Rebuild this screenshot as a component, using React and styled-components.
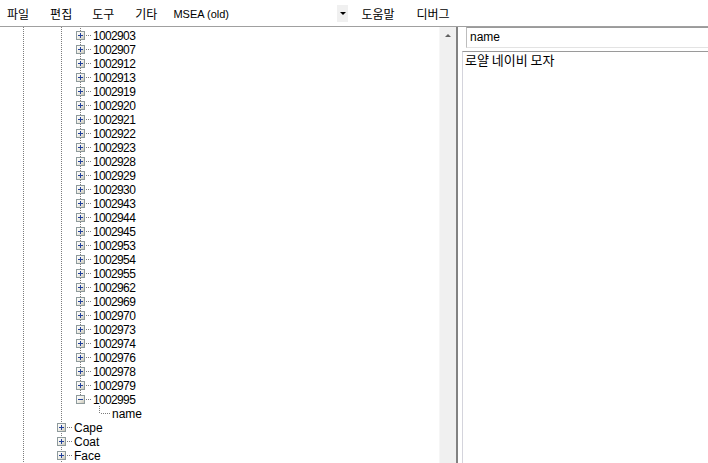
import React from 'react';
import styled, { createGlobalStyle } from 'styled-components';

const Global = createGlobalStyle`
  html, body { margin: 0; padding: 0; background: #fff; }
  body {
    width: 708px; height: 463px; overflow: hidden;
    font-family: "Liberation Sans", "Noto Sans CJK KR", sans-serif;
    color: #000;
  }
`;

const Window = styled.div`
  display: flex;
  flex-direction: column;
  width: 708px;
  height: 463px;
`;

const MenuBar = styled.div`
  box-sizing: border-box;
  height: 27px;
  display: flex;
  align-items: center;
  padding: 2px 0 0 7px;
  border-bottom: 1px solid #a0a0a0;
  flex: none;
`;

const MenuItem = styled.span`
  font-family: "Noto Sans CJK KR", sans-serif;
  font-size: 12px;
  line-height: 16px;
  margin-left: ${p => p.$ml || 0}px;
  white-space: nowrap;
`;

const Combo = styled.div`
  display: flex;
  align-items: center;
  width: 175px;
  margin-left: ${p => p.$ml}px;
  height: 17px;
  align-self: flex-start;
  margin-top: 3px;
`;

const ComboText = styled.span`
  flex: 1;
  font-family: "Liberation Sans", sans-serif;
  font-size: 11px;
  line-height: 17px;
  margin-top: 1px;
`;

const ComboButton = styled.span`
  width: 11px;
  height: 17px;
  background: #f0f0f0;
  display: flex;
  align-items: center;
  justify-content: center;
  &::before {
    content: "";
    border-left: 3px solid transparent;
    border-right: 3px solid transparent;
    border-top: 3px solid #000;
  }
`;

const Main = styled.div`
  flex: 1;
  display: flex;
  min-height: 0;
`;

const dots = 'repeating-linear-gradient(to bottom, #7c7c7c 0 1px, transparent 1px 2px)';

const TreePane = styled.div`
  flex: 0 0 439px;
  overflow: hidden;
  padding-top: 1px;
  box-sizing: border-box;
  background-image: ${dots}, ${dots};
  background-size: 1px 100%, 1px 100%;
  background-position: 23px 0, 61px 0;
  background-repeat: no-repeat;
`;

const Row = styled.div`
  display: flex;
  align-items: center;
  height: 14px;
  padding-left: ${p => p.$guide - 8}px;
`;

const Connector = styled.span`
  position: relative;
  flex: none;
  width: 21px;
  height: 14px;
  &::before {
    content: "";
    display: ${p => (p.$vertical === 'none' ? 'none' : 'block')};
    position: absolute;
    left: 8px;
    top: 0;
    width: 1px;
    height: ${p => (p.$vertical === 'top' ? 7 : 14)}px;
    background: ${dots};
  }
  &::after {
    content: "";
    position: absolute;
    left: 9px;
    top: 7px;
    width: 10px;
    height: 1px;
    background: repeating-linear-gradient(to right, transparent 0 1px, #7c7c7c 1px 2px);
  }
`;

const ExpandBox = styled.span`
  position: absolute;
  z-index: 1;
  left: 4px;
  top: 3px;
  width: 9px;
  height: 9px;
  box-sizing: border-box;
  border: 1px solid #8e9a9c;
  background: linear-gradient(135deg, #ffffff 0%, #f0efe8 50%, #c9c6b8 100%);
  &::before {
    content: "";
    position: absolute;
    left: 1px;
    top: 3px;
    width: 5px;
    height: 1px;
    background: #21409a;
  }
  &::after {
    content: "";
    display: ${p => (p.$open ? 'none' : 'block')};
    position: absolute;
    left: 3px;
    top: 1px;
    width: 1px;
    height: 5px;
    background: #21409a;
  }
`;

const Label = styled.span`
  font-family: "Liberation Sans", sans-serif;
  font-size: 12px;
  line-height: 14px;
  letter-spacing: ${p => (p.$numeric ? '-0.65px' : '0')};
  white-space: nowrap;
  margin-top: 1px;
`;

const Scrollbar = styled.div`
  flex: 0 0 17px;
  background: #f0f0f0;
  border-left: 1px solid #f6f6f6;
  box-sizing: border-box;
  display: flex;
  flex-direction: column;
`;

const ScrollUp = styled.div`
  height: 17px;
  display: flex;
  align-items: center;
  justify-content: center;
  &::before {
    content: "";
    border-left: 3px solid transparent;
    border-right: 3px solid transparent;
    border-bottom: 3px solid #606060;
  }
`;

const Splitter = styled.div`
  flex: 0 0 6px;
  box-sizing: border-box;
  border-left: 2px solid #828282;
`;

const RightPane = styled.div`
  flex: 1;
  display: flex;
  flex-direction: column;
  min-width: 0;
`;

const NameInput = styled.div`
  box-sizing: border-box;
  height: 21px;
  margin-left: 4px;
  border: 1px solid #bdbdbd;
  border-top-color: #9a9a9a;
  border-right: none;
  border-bottom-color: #e3e3e3;
  padding-left: 3px;
  font-family: "Liberation Sans", sans-serif;
  font-size: 12px;
  line-height: 18px;
`;

const TextArea = styled.div`
  flex: 1;
  margin-top: 3px;
  border-top: 1px solid #9a9a9a;
  border-left: 1px solid #d4d4dc;
  padding: 0 0 0 2px;
  font-family: "Noto Sans CJK KR", sans-serif;
  font-size: 13px;
  line-height: 16px;
`;

const ids = [
  '1002903', '1002907', '1002912', '1002913', '1002919', '1002920', '1002921',
  '1002922', '1002923', '1002928', '1002929', '1002930', '1002943', '1002944',
  '1002945', '1002953', '1002954', '1002955', '1002962', '1002969', '1002970',
  '1002973', '1002974', '1002976', '1002978', '1002979', '1002995',
];

function TreeRow({ guide, label, vertical = 'full', box, open, numeric }) {
  return (
    <Row $guide={guide}>
      <Connector $vertical={vertical}>
        {box && <ExpandBox $open={open} />}
      </Connector>
      <Label $numeric={numeric}>{label}</Label>
    </Row>
  );
}

export default function App() {
  return (
    <Window>
      <Global />
      <MenuBar>
        <MenuItem>파일</MenuItem>
        <MenuItem $ml={21}>편집</MenuItem>
        <MenuItem $ml={20}>도구</MenuItem>
        <MenuItem $ml={21}>기타</MenuItem>
        <Combo $ml={16}>
          <ComboText>MSEA (old)</ComboText>
          <ComboButton />
        </Combo>
        <MenuItem $ml={13}>도움말</MenuItem>
        <MenuItem $ml={22}>디버그</MenuItem>
      </MenuBar>
      <Main>
        <TreePane>
          {ids.map((id, i) => {
            const last = i === ids.length - 1;
            return (
              <TreeRow
                key={id}
                guide={80}
                label={id}
                numeric
                box
                open={last}
                vertical={last ? 'top' : 'full'}
              />
            );
          })}
          <TreeRow guide={99} label="name" vertical="top" />
          <TreeRow guide={61} label="Cape" vertical="none" box />
          <TreeRow guide={61} label="Coat" vertical="none" box />
          <TreeRow guide={61} label="Face" vertical="none" box />
        </TreePane>
        <Scrollbar>
          <ScrollUp />
        </Scrollbar>
        <Splitter />
        <RightPane>
          <NameInput>name</NameInput>
          <TextArea>로얄 네이비 모자</TextArea>
        </RightPane>
      </Main>
    </Window>
  );
}
